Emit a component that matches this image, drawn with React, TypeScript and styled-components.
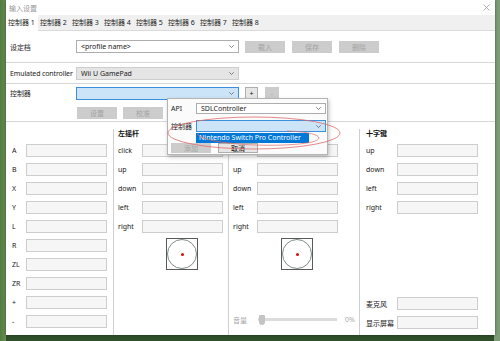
import styled, { createGlobalStyle } from 'styled-components';

const GlobalStyle = createGlobalStyle`
  html, body {
    margin: 0;
    padding: 0;
  }
  body {
    width: 500px;
    height: 341px;
    overflow: hidden;
    font-family: "Noto Sans", "Noto Sans CJK SC", sans-serif;
    font-size: 7px;
    color: #1a1a1a;
  }
  * {
    box-sizing: border-box;
  }
`;

const Desktop = styled.div`
  width: 500px;
  height: 341px;
  padding: 0 5px 6px 6px;
  background:
    linear-gradient(90deg, #4f7d3f 0px, #6c8f55 6px, transparent 6px, transparent 494px, #7f9c78 494px),
    linear-gradient(180deg, #7d9a72 0%, #5b8a4d 25%, #5d86a6 33%, #4a7b45 45%, #3d6a34 80%, #2f4f2b 100%);
`;

const Window = styled.div`
  position: relative;
  width: 489px;
  height: 335px;
  background: #fff;
  display: flex;
  flex-direction: column;
  box-shadow: 0 0 3px rgba(0, 0, 0, 0.45);
`;

const TitleBar = styled.div`
  height: 15px;
  display: flex;
  align-items: center;
  justify-content: space-between;
  padding: 0 5px 0 3px;
  color: #9a9a9a;
  font-size: 7px;
`;

const TabStrip = styled.div`
  height: 16px;
  display: flex;
  background: #f0f0f0;
  border-bottom: 1px solid #dadada;
`;

const Tab = styled.div<{ $active?: boolean }>`
  width: 32px;
  padding-left: 2px;
  line-height: 15px;
  white-space: nowrap;
  background: ${(p) => (p.$active ? '#fff' : 'transparent')};
  margin-bottom: ${(p) => (p.$active ? '-1px' : '0')};
`;

const Section = styled.div<{ $h: number }>`
  height: ${(p) => p.$h}px;
  padding-left: 4px;
  display: flex;
  flex-direction: column;
  justify-content: center;
  gap: 7px;
  border-bottom: 1px solid #d7d7d7;
`;

const FormRow = styled.div`
  display: flex;
  align-items: center;
`;

const FormLabel = styled.div`
  width: 66px;
  white-space: nowrap;
  letter-spacing: -0.12px;
`;

const Combo = styled.div<{ $variant?: 'white' | 'gray' | 'blue'; $w?: number; $h?: number }>`
  position: relative;
  width: ${(p) => p.$w ?? 163}px;
  height: ${(p) => p.$h ?? 13}px;
  display: flex;
  align-items: center;
  justify-content: space-between;
  padding: 0 4px 0 4px;
  white-space: nowrap;
  border: 1px solid
    ${(p) => (p.$variant === 'blue' ? '#3c8fdc' : p.$variant === 'gray' ? '#cdcdcd' : '#adadad')};
  background: ${(p) => (p.$variant === 'blue' ? '#cce4f7' : p.$variant === 'gray' ? '#e5e5e5' : '#fff')};
`;

const Button = styled.div<{ $w?: number; $h?: number; $enabled?: boolean; $ml?: number }>`
  width: ${(p) => p.$w ?? 40}px;
  height: ${(p) => p.$h ?? 12}px;
  margin-left: ${(p) => p.$ml ?? 6}px;
  display: flex;
  align-items: center;
  justify-content: center;
  background: ${(p) => (p.$enabled ? '#e6e6e6' : '#cccccc')};
  border: 1px solid ${(p) => (p.$enabled ? '#adadad' : '#cccccc')};
  color: ${(p) => (p.$enabled ? '#111' : '#a3a3a3')};
`;

const Mapping = styled.div`
  flex: 1;
  display: flex;
  padding-top: 7px;
`;

const Column = styled.div<{ $w?: number; $pl: number; $border?: boolean }>`
  ${(p) => (p.$w ? `width: ${p.$w}px;` : 'flex: 1;')}
  padding-left: ${(p) => p.$pl}px;
  border-left: ${(p) => (p.$border ? '1px solid #cfcfcf' : 'none')};
  display: flex;
  flex-direction: column;
`;

const Header = styled.div`
  height: 15px;
  line-height: 9px;
  color: #111;
  font-weight: 600;
`;

const FieldRow = styled.div<{ $push?: boolean; $mb?: number }>`
  display: flex;
  align-items: center;
  height: 13px;
  margin-bottom: ${(p) => p.$mb ?? 6}px;
  ${(p) => (p.$push ? 'margin-top: auto;' : '')}
`;

const FieldLabel = styled.div<{ $w: number; $muted?: boolean }>`
  width: ${(p) => p.$w}px;
  white-space: nowrap;
  color: ${(p) => (p.$muted ? '#a8a8a8' : '#1a1a1a')};
`;

const TextBox = styled.div`
  width: 81px;
  height: 13px;
  background: #f6f6f6;
  border: 1px solid #cdcdcd;
`;

const StickBox = styled.div<{ $ml: number }>`
  width: 32px;
  height: 32px;
  margin: -1px 0 0 ${(p) => p.$ml}px;
  border: 1px solid #5a5a5a;
  display: flex;
  align-items: center;
  justify-content: center;
`;

const StickCircle = styled.div`
  width: 30px;
  height: 30px;
  border-radius: 50%;
  border: 1px solid #7d8c8a;
  display: flex;
  align-items: center;
  justify-content: center;
`;

const StickDot = styled.div`
  width: 3px;
  height: 3px;
  border-radius: 50%;
  background: #d01010;
`;

const Slider = styled.div`
  width: 79px;
  height: 10px;
  margin-left: 1px;
  position: relative;
  display: flex;
  align-items: center;
`;

const SliderTrack = styled.div`
  width: 100%;
  height: 3px;
  background: #dcdcdc;
`;

const SliderThumb = styled.div`
  position: absolute;
  left: 1px;
  top: 0;
  width: 6px;
  height: 10px;
  background: #c4c4c4;
  border-radius: 1px 1px 3px 3px;
`;

const Percent = styled.div`
  margin-left: 8px;
  color: #ababab;
`;

const Popup = styled.div`
  position: absolute;
  left: 161px;
  top: 98px;
  width: 161px;
  height: 57px;
  background: #fbfbfb;
  border: 1px solid #b4b4b4;
  box-shadow: 1px 2px 4px rgba(0, 0, 0, 0.25);
  padding: 3px 0 0 3px;
  display: flex;
  flex-direction: column;
`;

const PopupRow = styled.div<{ $mt?: number }>`
  display: flex;
  align-items: center;
  margin-top: ${(p) => p.$mt ?? 0}px;
`;

const PopupLabel = styled.div`
  width: 25px;
  white-space: nowrap;
`;

const DropList = styled.div`
  position: absolute;
  left: -1px;
  top: 12px;
  width: 113px;
  height: 10px;
  padding-left: 3px;
  line-height: 10px;
  background: #0078d7;
  color: #fff;
  white-space: nowrap;
  z-index: 2;
`;

const PopupButtons = styled.div`
  display: flex;
  margin-top: 11px;
`;

const Annotation = styled.svg`
  position: absolute;
  left: 161px;
  top: 115px;
  pointer-events: none;
  z-index: 3;
`;

function Chevron() {
  return (
    <svg width="5" height="3" viewBox="0 0 5 3">
      <polyline points="0.3,0.3 2.5,2.5 4.7,0.3" fill="none" stroke="#555" strokeWidth="0.7" />
    </svg>
  );
}

function Field({ label, w, push }: { label: string; w: number; push?: boolean }) {
  return (
    <FieldRow $push={push}>
      <FieldLabel $w={w}>{label}</FieldLabel>
      <TextBox />
    </FieldRow>
  );
}

function Stick({ ml }: { ml: number }) {
  return (
    <StickBox $ml={ml}>
      <StickCircle>
        <StickDot />
      </StickCircle>
    </StickBox>
  );
}

const tabs = ['控制器 1', '控制器 2', '控制器 3', '控制器 4', '控制器 5', '控制器 6', '控制器 7', '控制器 8'];
const buttons = ['A', 'B', 'X', 'Y', 'L', 'R', 'ZL', 'ZR', '+', '-'];
const stickDirs = ['click', 'up', 'down', 'left', 'right'];
const dpad = ['up', 'down', 'left', 'right'];

export default function App() {
  return (
    <>
      <GlobalStyle />
      <Desktop>
        <Window>
          <TitleBar>
            <span>输入设置</span>
            <svg width="7" height="7" viewBox="0 0 7 7">
              <path d="M0.5 0.5 L6.5 6.5 M6.5 0.5 L0.5 6.5" stroke="#8a8a8a" strokeWidth="0.7" />
            </svg>
          </TitleBar>

          <TabStrip>
            {tabs.map((t, i) => (
              <Tab key={t} $active={i === 0}>{t}</Tab>
            ))}
          </TabStrip>

          <Section $h={32}>
            <FormRow>
              <FormLabel>设定档</FormLabel>
              <Combo>
                <span>&lt;profile name&gt;</span>
                <Chevron />
              </Combo>
              <Button>载入</Button>
              <Button $ml={7}>保存</Button>
              <Button $ml={7}>删除</Button>
            </FormRow>
          </Section>

          <Section $h={21}>
            <FormRow>
              <FormLabel>Emulated controller</FormLabel>
              <Combo $variant="gray">
                <span>Wii U GamePad</span>
                <Chevron />
              </Combo>
            </FormRow>
          </Section>

          <Section $h={38}>
            <FormRow>
              <FormLabel>控制器</FormLabel>
              <Combo $variant="blue">
                <span />
                <Chevron />
              </Combo>
              <Button $w={13} $h={13} $enabled $ml={6}>+</Button>
              <Button $w={14} $h={13} $ml={7}>-</Button>
            </FormRow>
            <FormRow>
              <FormLabel />
              <Button $ml={1}>设置</Button>
              <Button $ml={6}>校准</Button>
            </FormRow>
          </Section>

          <Mapping>
            <Column $w={107} $pl={6}>
              <Header />
              {buttons.map((b) => (
                <Field key={b} label={b} w={14} />
              ))}
            </Column>

            <Column $w={115} $pl={4} $border>
              <Header>左摇杆</Header>
              {stickDirs.map((d) => (
                <Field key={d} label={d} w={24} />
              ))}
              <Stick ml={48} />
            </Column>

            <Column $w={131} $pl={4} $border>
              <Header>右摇杆</Header>
              {stickDirs.map((d) => (
                <Field key={d} label={d} w={24} />
              ))}
              <Stick ml={48} />
              <FieldRow $push $mb={9}>
                <FieldLabel $w={24} $muted>音量</FieldLabel>
                <Slider>
                  <SliderTrack />
                  <SliderThumb />
                </Slider>
                <Percent>0%</Percent>
              </FieldRow>
            </Column>

            <Column $pl={6} $border>
              <Header>十字键</Header>
              {dpad.map((d) => (
                <Field key={d} label={d} w={31} />
              ))}
              <Field label="麦克风" w={31} push />
              <Field label="显示屏幕" w={31} />
            </Column>
          </Mapping>

          <Popup>
            <PopupRow $mt={1}>
              <PopupLabel>API</PopupLabel>
              <Combo $w={130} $h={11}>
                <span>SDLController</span>
                <Chevron />
              </Combo>
            </PopupRow>
            <PopupRow $mt={6}>
              <PopupLabel>控制器</PopupLabel>
              <Combo $variant="blue" $w={130} $h={12}>
                <span />
                <Chevron />
                <DropList>Nintendo Switch Pro Controller</DropList>
              </Combo>
            </PopupRow>
            <PopupButtons>
              <Button $ml={0} $h={10}>添加</Button>
              <Button $ml={7} $h={10} $enabled>取消</Button>
            </PopupButtons>
          </Popup>

          <Annotation width="185" height="40" viewBox="0 0 185 40">
            <ellipse cx="87" cy="18" rx="86" ry="16" fill="none" stroke="#e06a6a" strokeWidth="0.8" />
            <path d="M30 19 C 40 31, 120 33, 145 27 C 160 23, 150 17, 120 16" fill="none" stroke="#e06a6a" strokeWidth="0.7" />
          </Annotation>
        </Window>
      </Desktop>
    </>
  );
}
